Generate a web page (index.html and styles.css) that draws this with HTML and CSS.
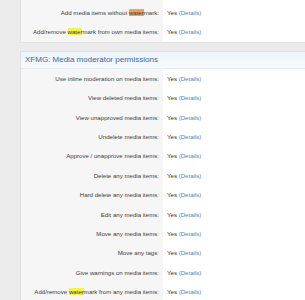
FILE: index.html
```html
<!DOCTYPE html>
<html lang="en">
<head>
    <meta charset="UTF-8">
    <title>Permissions</title>
    <link rel="stylesheet" href="styles.css">
</head>
<body>
    <div class="page">
        <div class="block first">
            <div class="row">
                <div class="label">Add media items without <mark class="current">water</mark>mark:</div>
                <div class="value">Yes <a href="#">(Details)</a></div>
            </div>
            <div class="row">
                <div class="label">Add/remove <mark>water</mark>mark from own media items:</div>
                <div class="value">Yes <a href="#">(Details)</a></div>
            </div>
        </div>

        <div class="block">
            <h3 class="block-header">XFMG: Media moderator permissions</h3>
            <div class="row">
                <div class="label">Use inline moderation on media items:</div>
                <div class="value">Yes <a href="#">(Details)</a></div>
            </div>
            <div class="row">
                <div class="label">View deleted media items:</div>
                <div class="value">Yes <a href="#">(Details)</a></div>
            </div>
            <div class="row">
                <div class="label">View unapproved media items:</div>
                <div class="value">Yes <a href="#">(Details)</a></div>
            </div>
            <div class="row">
                <div class="label">Undelete media items:</div>
                <div class="value">Yes <a href="#">(Details)</a></div>
            </div>
            <div class="row">
                <div class="label">Approve / unapprove media items:</div>
                <div class="value">Yes <a href="#">(Details)</a></div>
            </div>
            <div class="row">
                <div class="label">Delete any media items:</div>
                <div class="value">Yes <a href="#">(Details)</a></div>
            </div>
            <div class="row">
                <div class="label">Hard delete any media items:</div>
                <div class="value">Yes <a href="#">(Details)</a></div>
            </div>
            <div class="row">
                <div class="label">Edit any media items:</div>
                <div class="value">Yes <a href="#">(Details)</a></div>
            </div>
            <div class="row">
                <div class="label">Move any media items:</div>
                <div class="value">Yes <a href="#">(Details)</a></div>
            </div>
            <div class="row">
                <div class="label">Move any tags:</div>
                <div class="value">Yes <a href="#">(Details)</a></div>
            </div>
            <div class="row">
                <div class="label">Give warnings on media items:</div>
                <div class="value">Yes <a href="#">(Details)</a></div>
            </div>
            <div class="row">
                <div class="label">Add/remove <mark>water</mark>mark from any media items:</div>
                <div class="value">Yes <a href="#">(Details)</a></div>
            </div>
        </div>
    </div>
</body>
</html>
```

FILE: styles.css
```css
body {
    margin: 0;
    background: #ebebeb;
    font-family: 'Liberation Sans', Arial, sans-serif;
    overflow: hidden;
}

.page {
    padding-left: 20px;
}

.block {
    background: linear-gradient(to right, #f6f6f6 142px, #fff 142px);
    border: 1px solid #e1e1e1;
    border-right: none;
    margin-bottom: 8px;
}

.block.first {
    border-top: none;
    padding-top: 3px;
}

.block-header {
    margin: 0;
    height: 16px;
    line-height: 16px;
    padding-left: 4px;
    font-size: 8px;
    font-weight: normal;
    color: #3a6797;
    background: linear-gradient(to bottom, #edf4fb, #f6faff);
    border-bottom: 1px solid #e3ebf3;
}

.row {
    display: grid;
    grid-template-columns: 142px 1fr;
    height: 19.4px;
    line-height: 19.4px;
    font-size: 6.1px;
}

.label {
    text-align: right;
    padding-right: 4px;
    color: #3c3c3c;
}

.value {
    padding-left: 4px;
    color: #2a2a2a;
}

.value a {
    color: #5582b5;
    text-decoration: none;
}

mark {
    background: #f3f34c;
    color: inherit;
}

mark.current {
    background: #f0a15e;
}
```
